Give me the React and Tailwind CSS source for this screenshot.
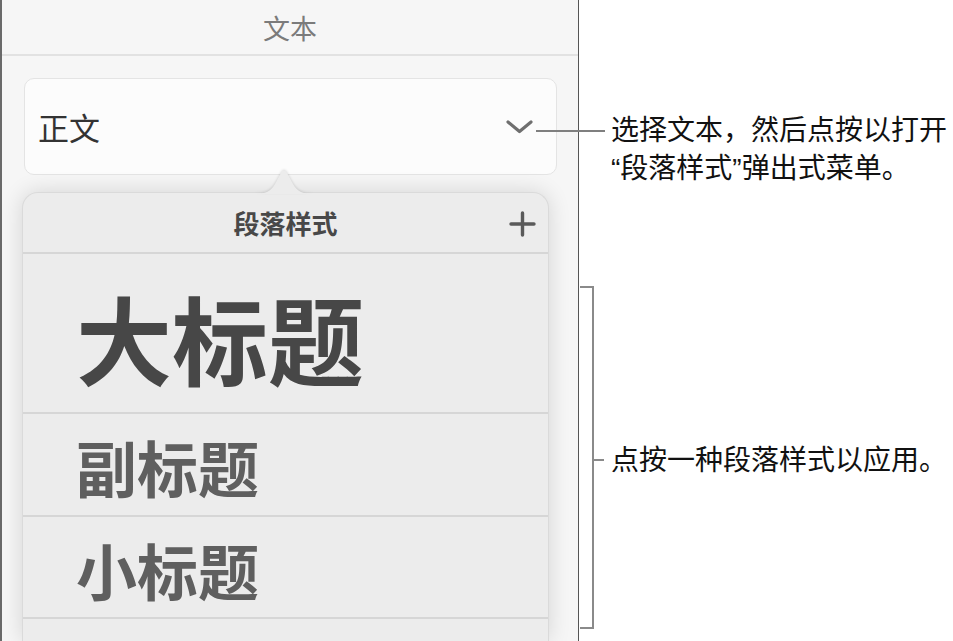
import React from 'react';

const ROWS = [
  { label: '大标题', h: 'h-[160px] pt-[8px]', text: 'text-[96px] text-[#474747]' },
  { label: '副标题', h: 'h-[103px] pt-[3px]', text: 'text-[61px] text-[#5f5f5f]' },
  { label: '小标题', h: 'h-[102px] pt-[4px]', text: 'text-[61px] text-[#5f5f5f]' },
];

function Chevron() {
  return (
    <svg width="27" height="14" viewBox="0 0 27 14" fill="none">
      <path d="M2 2 L13.5 11.5 L25 2" stroke="#6f6f6f" strokeWidth="3.2" strokeLinecap="round" strokeLinejoin="round" />
    </svg>
  );
}

function Plus() {
  return (
    <svg width="27" height="26" viewBox="0 0 27 26" fill="none">
      <path d="M13.5 2 V24 M2 13 H25" stroke="#5a5a5a" strokeWidth="3.4" strokeLinecap="round" />
    </svg>
  );
}

function Arrow() {
  return (
    <svg width="60" height="26" viewBox="0 0 60 26" className="absolute -top-[25px] left-[231px] drop-shadow-[0_-1px_1px_rgba(0,0,0,0.12)]">
      <path d="M0 26 C12 26 17 23 21 16 L27 5 C28.5 2 31.5 2 33 5 L39 16 C43 23 48 26 60 26 Z" fill="#ececec" />
    </svg>
  );
}

const Q = ({ children }) => <span className="font-['Liberation_Sans',sans-serif]">{children}</span>;

export default function App() {
  return (
    <div className="w-[953px] h-[641px] bg-white flex overflow-hidden font-['Noto_Sans_CJK_SC','Noto_Sans',sans-serif]">

      {/* Text inspector panel */}
      <div className="w-[579px] h-full shrink-0 bg-[#f6f6f6] border-l-2 border-l-[#6a6a6a] border-r border-r-[#555] flex flex-col">
        <div className="h-[56px] shrink-0 border-b-2 border-[#e2e2e2] flex items-center justify-center pt-[3px] text-[27px] text-[#7b7b7b]">
          文本
        </div>

        <div className="mt-[22px] ml-[22px] w-[533px] h-[97px] shrink-0 bg-[#fcfcfc] border border-[#e4e4e4] rounded-[10px] flex items-center justify-between pl-[13px] pr-[23px]">
          <span className="text-[31px] text-[#333] leading-none">正文</span>
          <Chevron />
        </div>

        {/* Paragraph style popover */}
        <div className="relative mt-[17px] ml-[20px] w-[527px] flex-1 bg-[#ececec] rounded-t-[16px] border-x border-t border-[#dadada] shadow-[0_0_22px_rgba(0,0,0,0.14)]">
          <Arrow />
          <div className="relative h-[61px] border-b-2 border-[#d6d6d6] flex items-center justify-center">
            <span className="text-[26px] font-semibold text-[#484848] leading-none">段落样式</span>
            <div className="absolute right-[12px] top-[18px]"><Plus /></div>
          </div>
          {ROWS.map(r => (
            <div key={r.label} className={`${r.h} border-b-2 border-[#d6d6d6] flex items-center pl-[53px]`}>
              <span className={`${r.text} font-bold leading-none`}>{r.label}</span>
            </div>
          ))}
        </div>
      </div>

      {/* Callouts */}
      <div className="flex-1 flex flex-col text-[28px] text-[#111]">
        <div className="relative mt-[109px] flex">
          <div className="absolute -left-[43px] top-[21px] w-[69px] h-[2px] bg-[#7f7f7f]" />
          <div className="ml-[32px]">
            <p className="leading-[38px]">选择文本，然后点按以打开</p>
            <p className="leading-[38px]"><Q>“</Q>段落样式<Q>”</Q>弹出式菜单。</p>
          </div>
        </div>

        <div className="mt-[98px] flex items-center">
          <div className="relative ml-[1px] w-[14px] h-[343px] border-y-2 border-r-2 border-[#8a8a8a]">
            <div className="absolute -right-[12px] top-[171px] w-[10px] h-[2px] bg-[#8a8a8a]" />
          </div>
          <p className="ml-[17px] leading-[36px]">点按一种段落样式以应用。</p>
        </div>
      </div>

    </div>
  );
}
